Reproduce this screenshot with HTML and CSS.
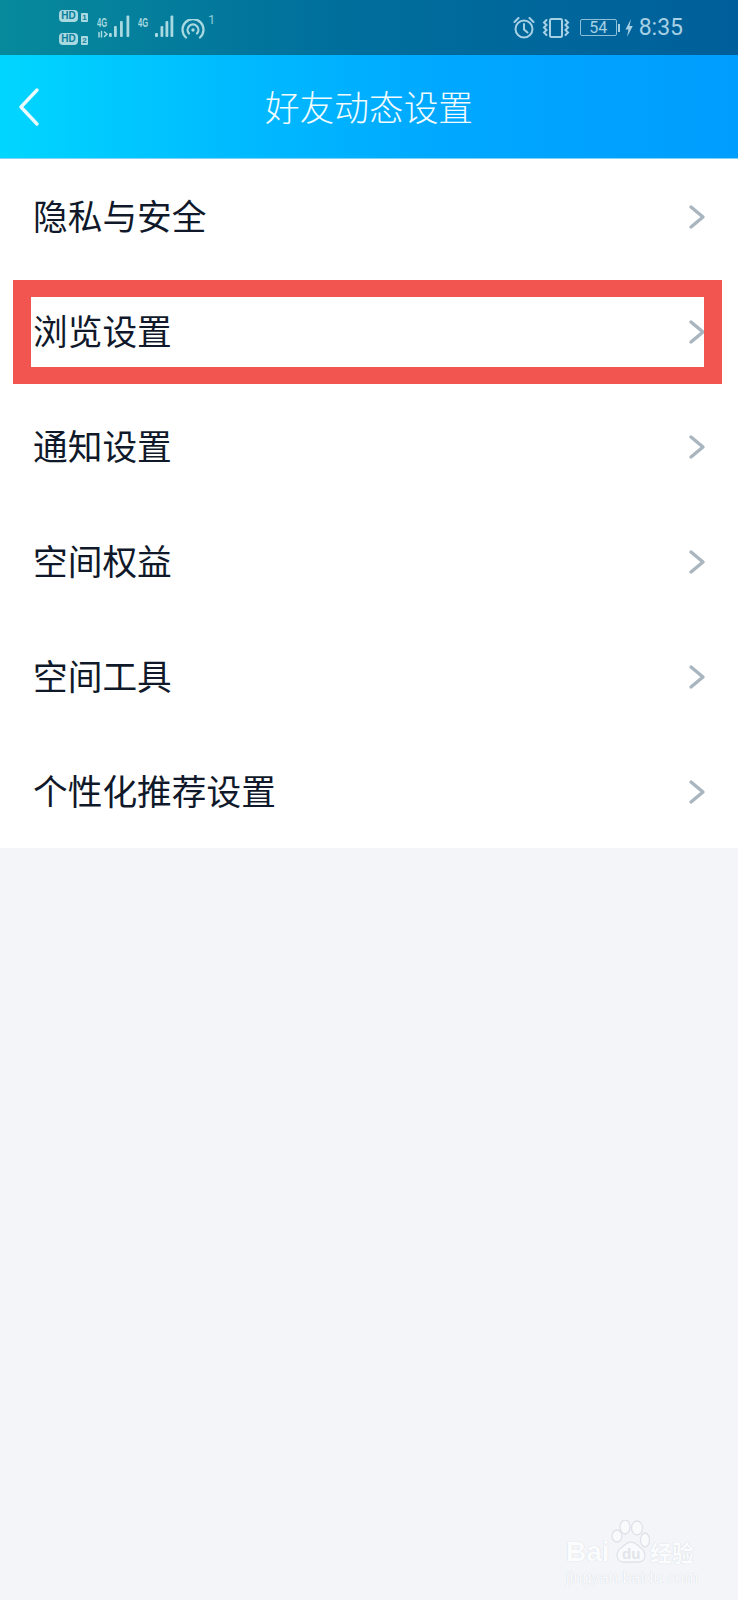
FILE: index.html
```html
<!DOCTYPE html>
<html lang="zh">
<head>
<meta charset="utf-8">
<title>好友动态设置</title>
<link rel="stylesheet" href="styles.css">
</head>
<body>
<div class="screen">
  <div class="statusbar">
    <div class="status-left">
      <div class="hd-stack">
        <div class="hd-line"><span class="hd">HD</span><span class="sim">1</span></div>
        <div class="hd-line"><span class="hd">HD</span><span class="sim">2</span></div>
      </div>
      <div class="signal signal-a">
        <span class="net">4G</span>
        <svg class="bars" width="34" height="24" viewBox="0 0 34 24"><g fill="none" stroke="#a8d8e0" stroke-linecap="round"><path d="M2 18.500v4.500M4.500 17.500v5.500" stroke-width="1.500"/><path d="M7.500 18l2.500 2.200-2.500 2.200" stroke-width="1.500"/></g><g fill="#a8d8e0"><rect x="12" y="19" width="2.800" height="4" rx="1"/><rect x="17" y="12" width="2.800" height="11" rx="1"/><rect x="23" y="7" width="2.800" height="16" rx="1"/><rect x="29.500" y="1.500" width="2.800" height="21.500" rx="1"/></g></svg>
      </div>
      <div class="signal signal-b">
        <span class="net">4G</span>
        <svg class="bars" width="24" height="24" viewBox="0 0 24 24"><g fill="#a8d8e0"><rect x="3" y="19" width="3" height="4" rx="1"/><rect x="8.500" y="12" width="2.800" height="11" rx="1"/><rect x="13.500" y="7" width="2.800" height="16" rx="1"/><rect x="18.500" y="1.500" width="2.800" height="21.500" rx="1"/></g></svg>
      </div>
      <svg class="hotspot" width="24" height="20" viewBox="0 0 24 20"><g fill="none" stroke="#a8d8e0" stroke-linecap="round" stroke-width="2.300"><path d="M5 18.500a10.500 10.500 0 1 1 14 0"/><path d="M8 14.500a5.400 5.400 0 1 1 8 0"/></g><circle cx="12" cy="11" r="1.700" fill="#a8d8e0"/></svg>
      <span class="hot-count">1</span>
    </div>
    <div class="status-right">
      <svg class="alarm" width="22" height="22" viewBox="0 0 22 22"><g fill="none" stroke="#a6d0e4" stroke-width="2"><circle cx="11" cy="12" r="8.500"/><path d="M11 7v5.500l3.500 3" stroke-linecap="round"/><path d="M1.500 5l4-4M20.500 5l-4-4" stroke-linecap="round"/></g></svg>
      <svg class="vibrate" width="28" height="20" viewBox="0 0 28 20"><g fill="none" stroke="#a6d0e4" stroke-width="2"><rect x="8" y="1" width="12" height="18" rx="1.500"/><path d="M4.500 2l-2.500 2.500 2.500 2.500-2.500 2.500 2.500 2.500-2.500 2.500 2.500 2.500" stroke-linecap="round"/><path d="M23.500 2l2.500 2.500-2.500 2.500 2.500 2.500-2.500 2.500 2.500 2.500-2.500 2.500" stroke-linecap="round"/></g></svg>
      <div class="battery"><span class="battery-body">54</span><span class="battery-tip"></span></div>
      <svg class="bolt" width="8" height="18" viewBox="0 0 8 18"><path d="M6 0L.5 10.500H3.500L2 18 7.800 7H4.500z" fill="#a6d0e4"/></svg>
      <span class="clock">8:35</span>
    </div>
  </div>

  <header class="navbar">
    <svg class="back" width="24" height="40" viewBox="0 0 24 40"><path d="M20 3L4 20l16 17" fill="none" stroke="#e9fbff" stroke-width="3.400" stroke-linecap="round" stroke-linejoin="round"/></svg>
    <h1 class="title">好友动态设置</h1>
  </header>

  <ul class="menu">
    <li class="row"><span class="label">隐私与安全</span><svg class="chev" width="18" height="26" viewBox="0 0 18 26"><path d="M3 3l12 10L3 23" fill="none" stroke="#a9b5bf" stroke-width="3.400" stroke-linecap="round" stroke-linejoin="round"/></svg></li>
    <li class="row"><span class="label">浏览设置</span><svg class="chev" width="18" height="26" viewBox="0 0 18 26"><path d="M3 3l12 10L3 23" fill="none" stroke="#a9b5bf" stroke-width="3.400" stroke-linecap="round" stroke-linejoin="round"/></svg><div class="flag"></div></li>
    <li class="row"><span class="label">通知设置</span><svg class="chev" width="18" height="26" viewBox="0 0 18 26"><path d="M3 3l12 10L3 23" fill="none" stroke="#a9b5bf" stroke-width="3.400" stroke-linecap="round" stroke-linejoin="round"/></svg></li>
    <li class="row"><span class="label">空间权益</span><svg class="chev" width="18" height="26" viewBox="0 0 18 26"><path d="M3 3l12 10L3 23" fill="none" stroke="#a9b5bf" stroke-width="3.400" stroke-linecap="round" stroke-linejoin="round"/></svg></li>
    <li class="row"><span class="label">空间工具</span><svg class="chev" width="18" height="26" viewBox="0 0 18 26"><path d="M3 3l12 10L3 23" fill="none" stroke="#a9b5bf" stroke-width="3.400" stroke-linecap="round" stroke-linejoin="round"/></svg></li>
    <li class="row"><span class="label">个性化推荐设置</span><svg class="chev" width="18" height="26" viewBox="0 0 18 26"><path d="M3 3l12 10L3 23" fill="none" stroke="#a9b5bf" stroke-width="3.400" stroke-linecap="round" stroke-linejoin="round"/></svg></li>
  </ul>

  <div class="watermark">
    <div class="wm-top">
      <span class="wm-bai">Bai</span>
      <div class="wm-paw">
        <svg width="40" height="44" viewBox="0 0 40 44"><g fill="#f9fafc" stroke="#dfe3e9" stroke-width="1.300"><ellipse cx="7" cy="16" rx="5" ry="6"/><ellipse cx="15" cy="7" rx="5" ry="7"/><ellipse cx="27" cy="8" rx="5.500" ry="7"/><ellipse cx="35" cy="20" rx="4.500" ry="7"/><path d="M21 22c-5 0-6 3-10 6-6 4-5 14 3 14h14c8 0 9-9 3-14-4-3-5-6-10-6z"/></g></svg>
        <span class="wm-du">du</span>
      </div>
      <span class="wm-cn">经验</span>
    </div>
    <div class="wm-url">jingyan.baidu.com</div>
  </div>
</div>
</body>
</html>
```

FILE: styles.css
```css
* { box-sizing: border-box; }
html, body { margin: 0; padding: 0; }
body {
  background: #f3f5f9;
  font-family: "Noto Sans CJK SC", "Noto Sans", sans-serif;
}
.screen {
  position: relative;
  width: 738px;
  height: 1600px;
  overflow: hidden;
  background: #f3f5f9;
}

/* status bar */
.statusbar {
  height: 55px;
  display: flex;
  justify-content: space-between;
  align-items: center;
  padding: 0 55px 0 59px;
  background: linear-gradient(90deg, #078a9c 0%, #006f9c 45%, #005f9a 100%);
}
.status-left, .status-right { display: flex; align-items: center; }
.hd-stack { display: flex; flex-direction: column; gap: 11px; width: 38px; }
.hd-line { display: flex; align-items: center; gap: 3px; }
.hd {
  width: 19px;
  height: 12px;
  border-radius: 4px;
  background: #a8d8e0;
  color: #0a7f9c;
  font: 700 10px/12px "Liberation Sans", sans-serif;
  text-align: center;
}
.sim {
  width: 7px;
  height: 9px;
  margin-top: 2px;
  border-radius: 1px;
  background: #a8d8e0;
  color: #0a7f9c;
  font: 700 8px/9px "Liberation Sans", sans-serif;
  text-align: center;
}
.signal { position: relative; display: flex; height: 24px; margin-top: -3px; }
.signal-a { width: 41px; }
.signal-b { width: 38px; padding-left: 14px; }
.net {
  position: absolute;
  left: 0;
  top: 2px;
  color: #a8d8e0;
  font: 700 13px/13px "Liberation Sans", sans-serif;
  transform: scaleX(.58);
  transform-origin: left;
}
.hotspot { margin: 3px 0 0 5px; }
.hot-count {
  align-self: flex-start;
  margin: 3px 0 0 3px;
  color: #8ccad6;
  font: 400 13px/14px "Roboto", sans-serif;
}
.alarm { margin-right: 7px; }
.vibrate { margin-right: 10px; }
.battery { display: flex; align-items: center; margin-right: 5px; }
.battery-body {
  width: 37px;
  height: 17px;
  border: 1px solid #8fbfd6;
  border-radius: 2px;
  color: #a6d0e4;
  font: 400 16px/15px "Roboto", sans-serif;
  text-align: center;
}
.battery-tip { width: 2px; height: 8px; margin-left: 1px; background: #a6d0e4; }
.bolt { margin-right: 6px; }
.clock {
  color: #a6d0e4;
  font: 400 23px/26px "Roboto", sans-serif;
}

/* nav bar */
.navbar {
  position: relative;
  height: 104px;
  display: flex;
  align-items: center;
  justify-content: center;
  background: linear-gradient(90deg, #00d6ff 0%, #00bcff 30%, #00a8ff 60%, #009dfe 100%);
  border-bottom: 1px solid #7fd4f5;
}
.back { position: absolute; left: 17px; top: 32px; }
.title {
  margin: 0 0 2px 0;
  color: #f2fcff;
  font-size: 34.700px;
  font-weight: 300;
  line-height: 48px;
}

/* list */
.menu {
  height: 689px;
  margin: 0;
  padding: 0;
  list-style: none;
  background: #fff;
}
.row {
  position: relative;
  height: 115px;
  display: flex;
  align-items: center;
  justify-content: space-between;
  padding: 0 32px 0 33px;
  color: #10192a;
  font-size: 34.700px;
  line-height: 48px;
}
.label { margin-bottom: 4px; }
.flag {
  position: absolute;
  left: 13px;
  right: 16px;
  top: 6px;
  height: 104px;
  border: 17px solid #f2554f;
  border-left-width: 18px;
  border-right-width: 18px;
}

/* watermark */
.watermark {
  position: absolute;
  left: 566px;
  top: 1520px;
  width: 150px;
  color: #fbfcfd;
  text-shadow: 0 0 1px #c9ced6;
}
.wm-top { display: flex; align-items: flex-end; height: 44px; }
.wm-bai {
  width: 44px;
  font: 700 28px/24px "Liberation Sans", sans-serif;
}
.wm-paw { position: relative; width: 40px; height: 44px; }
.wm-du {
  position: absolute;
  left: 12px;
  top: 26px;
  color: #e1e4ea;
  text-shadow: none;
  font: 700 15px/16px "Liberation Sans", sans-serif;
}
.wm-cn {
  font-size: 22px;
  font-weight: 700;
  line-height: 26px;
}
.wm-url {
  margin-top: 3px;
  font: 400 16.400px/20px "Liberation Sans", sans-serif;
  white-space: nowrap;
}
```
